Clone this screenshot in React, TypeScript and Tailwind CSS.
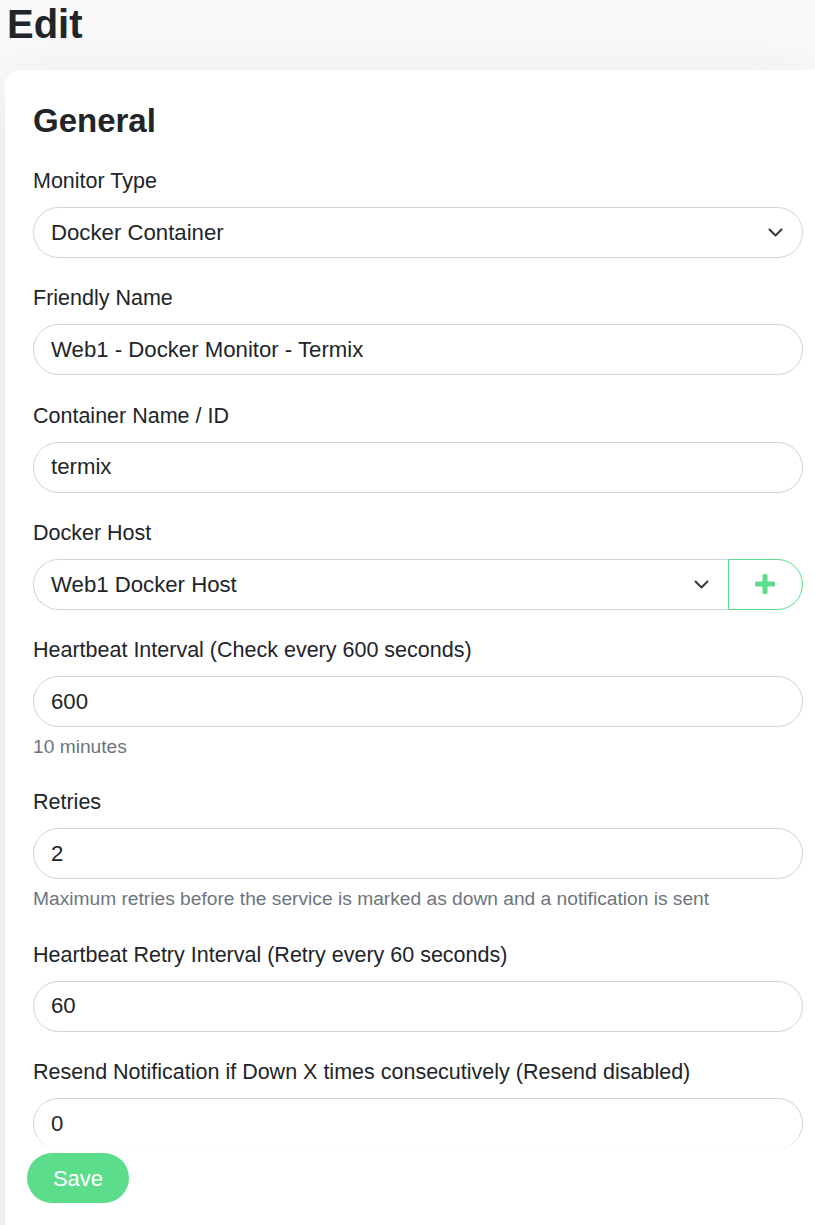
import type { ReactNode } from "react";

const Chevron = () => (
  <svg width="15" height="9" viewBox="0 0 15 9" fill="none" className="shrink-0">
    <path d="M1.5 1.5l6 6 6-6" stroke="#343a40" strokeWidth="2" strokeLinecap="round" strokeLinejoin="round" />
  </svg>
);

const Plus = () => (
  <svg width="20" height="20" viewBox="0 0 20 20">
    <rect x="7.5" y="0" width="5" height="20" rx="1.5" fill="#5cdd8b" />
    <rect x="0" y="7.5" width="20" height="5" rx="1.5" fill="#5cdd8b" />
  </svg>
);

const Field = ({ label, children, help }: { label: string; children: ReactNode; help?: string }) => (
  <div className="mb-[24.25px]">
    <div className="mb-[9px] text-[21.5px] leading-[33px] text-[#212529]">{label}</div>
    {children}
    {help && <div className="mt-[5px] text-[19.2px] leading-[30px] text-[#6c757d]">{help}</div>}
  </div>
);

const Input = ({ value }: { value: string }) => (
  <div className="flex h-[51px] items-center rounded-full border border-[#ced4da] bg-white px-[17px] text-[22.2px] text-[#212529]">
    {value}
  </div>
);

const Select = ({ value }: { value: string }) => (
  <div className="flex h-[51px] items-center justify-between rounded-full border border-[#ced4da] bg-white pl-[17px] pr-[19px] text-[22.2px] text-[#212529]">
    <span>{value}</span>
    <Chevron />
  </div>
);

export default function App() {
  return (
    <div className="relative h-[1225px] overflow-hidden bg-[#fafafa] font-['Liberation_Sans',Arial,sans-serif]">
      <h1 className="pl-[7px] text-[40px] font-bold leading-[48px] text-[#212529]">Edit</h1>

      <div className="ml-[5px] mt-[22px] rounded-l-[15px] bg-white pl-[28px] pr-[12px] pt-[31px] shadow-[0_15px_70px_rgba(0,0,0,0.1)]">
        <h4 className="mb-[24px] text-[33px] font-bold leading-[40px] text-[#212529]">General</h4>

        <Field label="Monitor Type">
          <Select value="Docker Container" />
        </Field>

        <Field label="Friendly Name">
          <Input value="Web1 - Docker Monitor - Termix" />
        </Field>

        <Field label="Container Name / ID">
          <Input value="termix" />
        </Field>

        <Field label="Docker Host">
          <div className="flex h-[51px]">
            <div className="flex flex-1 items-center justify-between rounded-l-full border border-r-0 border-[#ced4da] bg-white pl-[17px] pr-[19px] text-[22.2px] text-[#212529]">
              <span>Web1 Docker Host</span>
              <Chevron />
            </div>
            <button className="flex w-[75px] items-center justify-center rounded-r-full border border-[#5cdd8b] bg-white pr-[2px]">
              <Plus />
            </button>
          </div>
        </Field>

        <Field label="Heartbeat Interval (Check every 600 seconds)" help="10 minutes">
          <Input value="600" />
        </Field>

        <Field label="Retries" help="Maximum retries before the service is marked as down and a notification is sent">
          <Input value="2" />
        </Field>

        <Field label="Heartbeat Retry Interval (Retry every 60 seconds)">
          <Input value="60" />
        </Field>

        <Field label="Resend Notification if Down X times consecutively (Resend disabled)">
          <Input value="0" />
        </Field>

        <h4 className="mt-[70px] text-[33px] font-bold leading-[40px] text-[#212529]">Advanced</h4>
      </div>

      <div className="absolute left-[5px] right-0 top-[1134px] h-[78px] bg-linear-to-b from-white/0 to-white to-20% pl-[22px] pt-[19px]">
        <button className="h-[50px] w-[102px] rounded-full bg-[#5cdd8b] text-[22px] text-white">Save</button>
      </div>
    </div>
  );
}
